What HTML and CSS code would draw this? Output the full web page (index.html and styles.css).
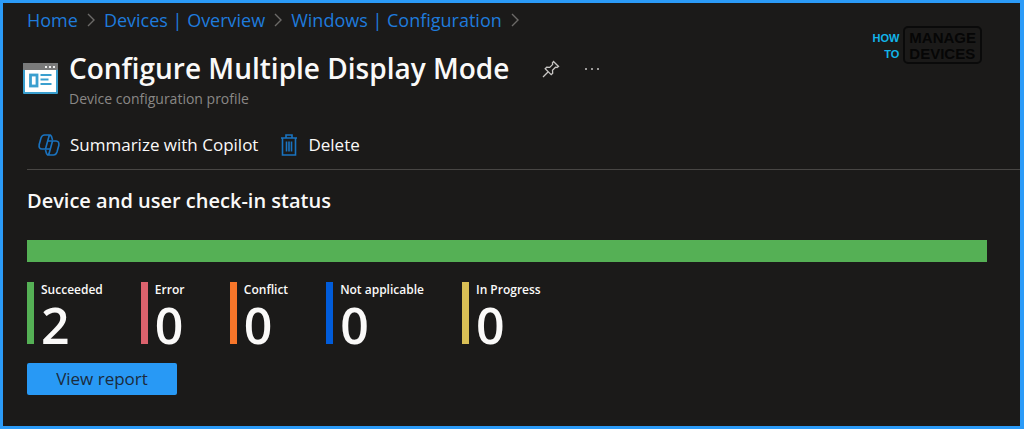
FILE: index.html
```html
<!DOCTYPE html>
<html lang="en">
<head>
  <meta charset="UTF-8" />
  <title>Configure Multiple Display Mode</title>
  <meta name="viewport" content="width=device-width, initial-scale=1" />
  <link rel="stylesheet" href="styles.css">
</head>
<body>
  <header class="top">
    <div class="top-main">
      <nav class="breadcrumb" aria-label="Breadcrumb">
        <a href="#">Home</a>
        <svg class="chevron" viewBox="0 0 8 14"><path d="M1 1l6 6-6 6" /></svg>
        <a href="#">Devices | Overview</a>
        <svg class="chevron" viewBox="0 0 8 14"><path d="M1 1l6 6-6 6" /></svg>
        <a href="#">Windows | Configuration</a>
        <svg class="chevron" viewBox="0 0 8 14"><path d="M1 1l6 6-6 6" /></svg>
      </nav>

      <div class="title-row">
        <svg class="profile-icon" viewBox="0 0 35 31">
          <rect width="35" height="31" rx="1" fill="#3a9fcf" />
          <rect width="35" height="7" rx="1" fill="#7a7a7a" />
          <rect x="2" y="7" width="31" height="22" fill="#fff" />
          <path d="M22 3h2v2h-2zM26 3h2v2h-2zM30 3h2v2h-2z" fill="#eee" />
          <rect x="7.500" y="12" width="6.500" height="11" fill="none" stroke="#3a9fcf" stroke-width="2.800" />
          <path d="M17.500 12h11M17.500 16.500h8M17.500 21h11" fill="none" stroke="#3a9fcf" stroke-width="2.200" />
        </svg>
        <div class="title-text">
          <div class="title-line">
            <h1>Configure Multiple Display Mode</h1>
            <button class="icon-btn pin" aria-label="Pin">
              <svg width="18" height="18" viewBox="0 0 18 18"><path d="M11.500 1.500l5 5-1.500 1-1.500-.3-3 3 .2 3-1.500 1.500-6-6L4.700 7.200l3 .2 3-3-.3-1.500zM6 12l-5 5" /></svg>
            </button>
            <button class="icon-btn" aria-label="More">
              <svg class="dots" width="16" height="18" viewBox="0 0 16 18"><circle cx="2" cy="9" r="1" /><circle cx="8" cy="9" r="1" /><circle cx="14" cy="9" r="1" /></svg>
            </button>
          </div>
          <p class="subtitle">Device configuration profile</p>
        </div>
      </div>
    </div>

    <div class="logo">
      <div class="logo-how">HOW<br>TO</div>
      <div class="logo-box">MANAGE<br>DEVICES</div>
    </div>
  </header>

  <div class="commands">
    <button>
      <svg width="22" height="22" viewBox="0 0 22 22">
        <path d="M14.500 6l-1-3.500Q13 1 11.500 1H6.500Q4 1 3 4L1.200 10.500Q0.500 15 4 15h3.500l3-11Q11 1 13 1" />
        <path d="M7.500 16l1 3.500Q9 21 10.500 21h5Q18 21 19 18l1.800-6.500Q21.500 7 18 7h-3.500l-3 11Q11 21 9 21" />
        <path d="M9.500 7h5M7.500 15h5" />
      </svg>
      Summarize with Copilot
    </button>
    <button>
      <svg width="18" height="22" viewBox="0 0 18 22">
        <path d="M1 4h16M6 4V1h6v3M2.500 4v17h13V4" />
        <path d="M6.500 7.500v10M9 7.500v10M11.500 7.500v10" />
      </svg>
      Delete
    </button>
  </div>

  <main>
    <h2>Device and user check-in status</h2>
    <div class="status-bar"></div>
    <dl class="stats">
      <div class="stat succeeded"><dt>Succeeded</dt><dd>2</dd></div>
      <div class="stat error"><dt>Error</dt><dd>0</dd></div>
      <div class="stat conflict"><dt>Conflict</dt><dd>0</dd></div>
      <div class="stat not-applicable"><dt>Not applicable</dt><dd>0</dd></div>
      <div class="stat in-progress"><dt>In Progress</dt><dd>0</dd></div>
    </dl>
    <button class="report-btn">View report</button>
  </main>
</body>
</html>
```
FILE: styles.css
```css
:root {
  --bg: #1b1a19;
  --fg: #faf9f8;
  --link: #1f7bdc;
  --accent: #2899f5;
}
* { box-sizing: border-box; }
body {
  margin: 0;
  min-height: 100vh;
  border: 3px solid #2b9bf8;
  border-right-width: 4px;
  background: var(--bg);
  color: var(--fg);
  font-family: "Open Sans", "Noto Sans", sans-serif;
  font-size: 17px;
  line-height: 24px;
}
h1, h2, p, dl, dt, dd { margin: 0; }
button {
  font: inherit;
  color: inherit;
  background: none;
  border: none;
  padding: 0;
  cursor: pointer;
}
svg { flex: none; fill: none; }

.top {
  display: flex;
  justify-content: space-between;
  padding: 5px 38px 0 20px;
}
.breadcrumb {
  display: flex;
  align-items: center;
  gap: 9px;
  padding-left: 4px;
  font-size: 18px;
}
.breadcrumb a { color: var(--link); text-decoration: none; }
.chevron {
  width: 8px;
  height: 14px;
  stroke: #6c6a68;
  stroke-width: 1.4;
}
.title-row {
  display: flex;
  align-items: center;
  gap: 11px;
  margin-top: 16px;
}
.profile-icon { width: 35px; height: 31px; }
.title-line { display: flex; align-items: center; }
h1 {
  font-size: 28px;
  font-weight: 600;
  line-height: 41px;
}
.icon-btn {
  display: flex;
  margin-left: 24px;
}
.pin { margin-left: 33px; }
.icon-btn svg { stroke: #c8c6c4; stroke-width: 1.3; }
.icon-btn .dots { fill: #c8c6c4; stroke: none; }
.subtitle {
  color: #8a8886;
  font-size: 14px;
  line-height: 20px;
}

.logo {
  display: flex;
  gap: 4px;
  margin-top: 18px;
  height: 38px;
  font-family: "Liberation Sans Narrow", "Liberation Sans", sans-serif;
  line-height: 16px;
}
.logo-how {
  padding-top: 4px;
  color: #12b5ea;
  font-size: 11px;
  font-weight: bold;
  text-align: right;
}
.logo-box {
  padding: 2px 4px;
  border: 2px solid #0a0a0a;
  border-radius: 5px;
  color: #060606;
  font-size: 15px;
  font-weight: bold;
}

.commands {
  display: flex;
  gap: 22px;
  margin-left: 24px;
  padding: 24px 0 12px 11px;
  border-bottom: 1px solid #484644;
}
.commands button {
  display: flex;
  align-items: center;
  gap: 10px;
}
.commands svg { stroke: #1a73c0; stroke-width: 1.6; }

main { padding: 18px 33px 24px 24px; }
h2 {
  font-size: 20px;
  font-weight: 600;
  line-height: 26px;
}
.status-bar {
  height: 22px;
  margin: 26px 0 20px;
  background: #55b055;
}
.stats {
  display: flex;
  gap: 38px;
}
.stat {
  min-width: 51px;
  height: 62px;
  padding-left: 7px;
  border-left: 7px solid;
}
.stat dt {
  color: var(--fg);
  font-size: 12px;
  font-weight: 600;
  line-height: 16px;
}
.stat dd {
  color: var(--fg);
  font-size: 50px;
  font-weight: 600;
  line-height: 54px;
}
.succeeded { border-color: #55b055; }
.error { border-color: #dc626d; }
.conflict { border-color: #f7762a; }
.not-applicable { border-color: #015cda; }
.in-progress { border-color: #d9bf55; }
.report-btn {
  display: block;
  width: 150px;
  margin-top: 19px;
  padding: 4px 0;
  border-radius: 2px;
  background: var(--accent);
  color: #1b2b3d;
}
```
